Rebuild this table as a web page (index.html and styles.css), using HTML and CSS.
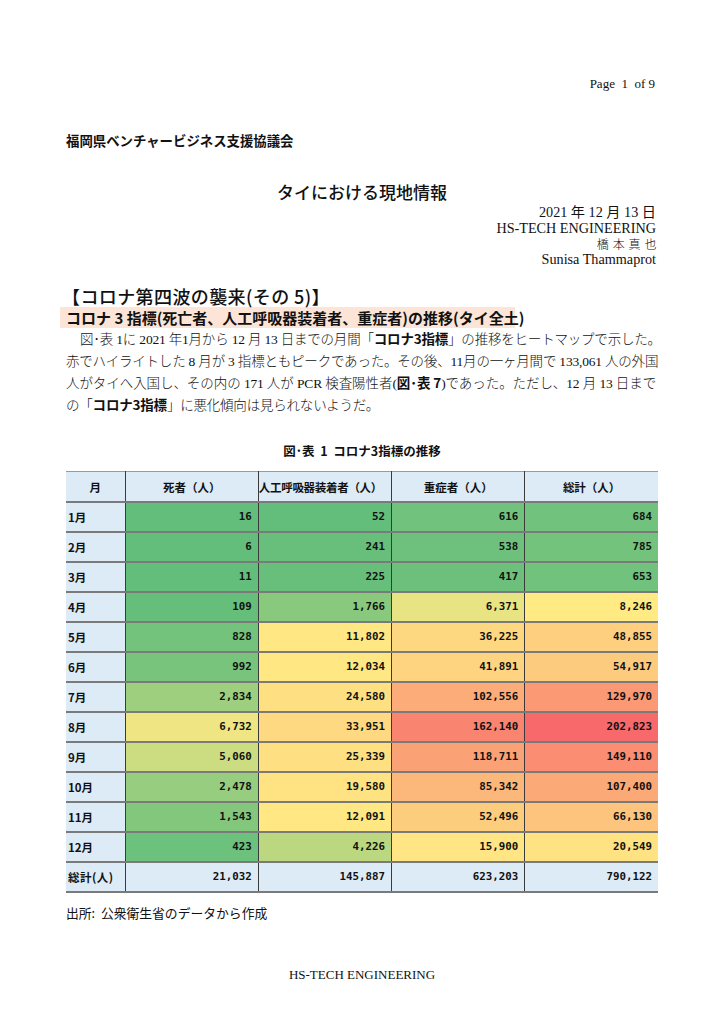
FILE: index.html
```html
<!DOCTYPE html>
<html lang="ja">
<head>
<meta charset="utf-8">
<title>タイにおける現地情報</title>
<link rel="stylesheet" href="styles.css">
</head>
<body>
<div class="page">
  <div class="pagenum">Page&nbsp; 1&nbsp; of 9</div>
  <div class="org">福岡県ベンチャービジネス支援協議会</div>
  <div class="title">タイにおける現地情報</div>
  <div class="author">
    <div>2021 年 12 月 13 日</div>
    <div>HS-TECH ENGINEERING</div>
    <div class="jp">橋 本 真 也</div>
    <div>Sunisa Thammaprot</div>
  </div>
  <div class="h1">【コロナ第四波の襲来(その 5)】</div>
  <div class="h2">コロナ 3 指標(死亡者、人工呼吸器装着者、重症者)の推移(タイ全土)</div>
  <div class="para">
    <div class="line indent">図･表 1に 2021 年1月から 12 月 13 日までの月間「<b>コロナ3指標</b>」の推移をヒートマップで示した。</div>
    <div class="line">赤でハイライトした 8 月が 3 指標ともピークであった。その後、11月の一ヶ月間で 133,061 人の外国</div>
    <div class="line">人がタイへ入国し、その内の 171 人が PCR 検査陽性者(<b>図･表 7</b>)であった。ただし、12 月 13 日まで</div>
    <div class="line last">の「<b>コロナ3指標</b>」に悪化傾向は見られないようだ。</div>
  </div>
  <div class="caption">図･表&nbsp; 1&nbsp; コロナ3指標の推移</div>
  <table class="heat">
    <colgroup>
      <col class="c-month"><col class="c-num"><col class="c-num"><col class="c-num"><col class="c-num">
    </colgroup>
    <thead>
      <tr><th>月</th><th>死者（人）</th><th class="tight">人工呼吸器装着者（人）</th><th>重症者（人）</th><th>総計（人）</th></tr>
    </thead>
    <tbody>
      <tr><td class="m">1月</td><td style="background:#63be7b">16</td><td style="background:#64be7b">52</td><td style="background:#70c27c">616</td><td style="background:#71c27c">684</td></tr>
      <tr><td class="m">2月</td><td style="background:#63be7b">6</td><td style="background:#68bf7b">241</td><td style="background:#6ec17c">538</td><td style="background:#73c37c">785</td></tr>
      <tr><td class="m">3月</td><td style="background:#63be7b">11</td><td style="background:#68bf7b">225</td><td style="background:#6cc07b">417</td><td style="background:#70c27c">653</td></tr>
      <tr><td class="m">4月</td><td style="background:#65bf7b">109</td><td style="background:#88c97d">1,766</td><td style="background:#e8e483">6,371</td><td style="background:#ffea84">8,246</td></tr>
      <tr><td class="m">5月</td><td style="background:#74c37c">828</td><td style="background:#ffe883">11,802</td><td style="background:#fed880">36,225</td><td style="background:#fecf7f">48,855</td></tr>
      <tr><td class="m">6月</td><td style="background:#78c47c">992</td><td style="background:#ffe883">12,034</td><td style="background:#fed480">41,891</td><td style="background:#fdcb7e">54,917</td></tr>
      <tr><td class="m">7月</td><td style="background:#9ecf7e">2,834</td><td style="background:#fee082">24,580</td><td style="background:#fcac78">102,556</td><td style="background:#fb9974">129,970</td></tr>
      <tr><td class="m">8月</td><td style="background:#efe683">6,732</td><td style="background:#fed981">33,951</td><td style="background:#f98470">162,140</td><td style="background:#f8696b">202,823</td></tr>
      <tr><td class="m">9月</td><td style="background:#ccdc81">5,060</td><td style="background:#fedf82">25,339</td><td style="background:#fba176">118,711</td><td style="background:#fa8d72">149,110</td></tr>
      <tr><td class="m">10月</td><td style="background:#97cd7e">2,478</td><td style="background:#ffe382">19,580</td><td style="background:#fcb77a">85,342</td><td style="background:#fba977">107,400</td></tr>
      <tr><td class="m">11月</td><td style="background:#83c77d">1,543</td><td style="background:#ffe883">12,091</td><td style="background:#fdcd7e">52,496</td><td style="background:#fdc47d">66,130</td></tr>
      <tr><td class="m">12月</td><td style="background:#6cc17c">423</td><td style="background:#bbd780">4,226</td><td style="background:#ffe583">15,900</td><td style="background:#ffe282">20,549</td></tr>
    </tbody>
    <tfoot>
      <tr><td class="m">総計(人)</td><td>21,032</td><td>145,887</td><td>623,203</td><td>790,122</td></tr>
    </tfoot>
  </table>
  <div class="source">出所:&nbsp; 公衆衛生省のデータから作成</div>
  <div class="footer">HS-TECH ENGINEERING</div>
</div>
</body>
</html>
```
FILE: styles.css
```css
html, body {
  margin: 0;
  padding: 0;
  background: #ffffff;
  color: #111111;
}
.page {
  width: 724px;
  box-sizing: border-box;
  padding: 0 66px 0 66px;
  font-family: "Liberation Serif", "Noto Sans CJK JP", serif;
}
.pagenum {
  margin-top: 76px;
  margin-right: 3px;
  font-size: 13px;
  line-height: 16px;
  text-align: right;
}
.org {
  margin-top: 39px;
  font-family: "Noto Sans CJK JP", sans-serif;
  font-weight: 700;
  font-size: 13.4px;
  line-height: 18px;
}
.title {
  margin-top: 31px;
  font-family: "Noto Sans CJK JP", sans-serif;
  font-weight: 500;
  font-size: 17px;
  line-height: 24px;
  text-align: center;
}
.author {
  margin-top: 1px;
  margin-right: 2px;
  font-size: 14.2px;
  line-height: 15.6px;
  text-align: right;
}
.author > div {
  height: 15.6px;
}
.author .jp {
  font-family: "Noto Sans CJK JP", sans-serif;
  font-weight: 300;
  font-size: 12px;
  letter-spacing: 0.6px;
  margin-right: -1px;
}
.h1 {
  margin-top: 18px;
  margin-left: -4px;
  font-family: "Noto Sans CJK JP", sans-serif;
  font-weight: 500;
  font-size: 18px;
  line-height: 22px;
  height: 22px;
  letter-spacing: 0.4px;
}
.h2 {
  width: 449px;
  margin-left: -6px;
  padding-left: 6px;
  background: #fce4d6;
  font-family: "Noto Sans CJK JP", sans-serif;
  font-weight: 700;
  font-size: 15px;
  line-height: 21px;
  height: 21px;
  white-space: nowrap;
}
.para {
  margin-top: 1px;
  width: 590px;
  font-family: "Liberation Serif", "Noto Sans CJK JP", serif;
  font-size: 13.5px;
  line-height: 22px;
}
.para b {
  font-family: "Noto Sans CJK JP", sans-serif;
  font-weight: 700;
  line-height: 1;
}
.para .line {
  height: 22px;
  white-space: nowrap;
  text-align: justify;
  text-align-last: justify;
  font-weight: 300;
  letter-spacing: -0.2px;
}
.para .line.indent {
  padding-left: 14px;
}
.para .line.last {
  text-align-last: left;
}
.caption {
  margin-top: 25px;
  font-family: "Noto Sans CJK JP", sans-serif;
  font-weight: 700;
  font-size: 12.5px;
  line-height: 18px;
  height: 18px;
  text-align: center;
}
.heat {
  margin-top: 11px;
  width: 592px;
  border-collapse: collapse;
  table-layout: fixed;
  font-family: "Noto Sans CJK JP", sans-serif;
}
.heat .c-month { width: 59px; }
.heat .c-num { width: 133px; }
.heat th, .heat td {
  height: 30px;
  padding: 0;
  border-left: 1px solid #3a3a3a;
  border-right: 1px solid #3a3a3a;
  border-bottom: 2px solid #7a7a7a;
  box-sizing: border-box;
}
.heat tr > :first-child { border-left: none; }
.heat tr > :last-child { border-right: none; }
.heat thead th {
  background: #ddebf7;
  border-top: 1px solid #9a9a9a;
  font-weight: 700;
  font-size: 11.5px;
  text-align: center;
  white-space: nowrap;
}
.heat thead th.tight {
  letter-spacing: -0.3px;
  text-align: left;
  padding-left: 0;
}
.heat td {
  text-align: right;
  padding-right: 6px;
  font-family: "DejaVu Sans Mono", monospace;
  font-weight: 700;
  font-size: 10.8px;
}
.heat td.m {
  background: #ddebf7;
  text-align: left;
  padding-left: 2px;
  padding-right: 0;
  font-family: "Noto Sans CJK JP", sans-serif;
  font-size: 11.5px;
}
.heat tfoot td {
  background: #ddebf7;
}
.heat tfoot td.m {
  letter-spacing: 0.5px;
}
.source {
  margin-top: 12px;
  font-family: "Noto Sans CJK JP", sans-serif;
  font-weight: 400;
  font-size: 12.8px;
  line-height: 16px;
}
.footer {
  margin-top: 46px;
  font-size: 13px;
  line-height: 16px;
  text-align: center;
}
```
